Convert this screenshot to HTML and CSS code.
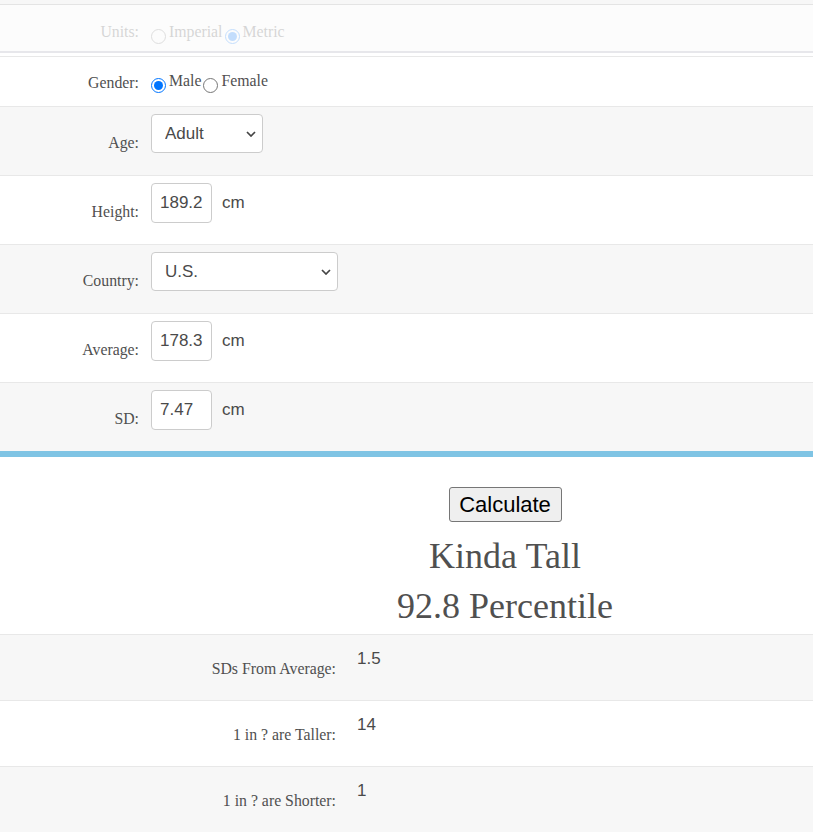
FILE: index.html
```html
<!DOCTYPE html>
<html lang="en">
<head>
<meta charset="utf-8">
<title>Height Percentile Calculator</title>
<link rel="stylesheet" href="styles.css">
</head>
<body>
<div class="top-strip"></div>
<div class="units-panel">
  <div class="units-row">
    <span class="label">Units:</span>
    <div class="radios">
      <input type="radio" name="units" class="radio"><span class="opt">Imperial</span><input type="radio" name="units" class="radio" checked><span class="opt">Metric</span>
    </div>
  </div>
</div>
<div class="spacer"></div>

<div class="row row-short">
  <label class="label">Gender:</label>
  <div class="field radios">
    <input type="radio" name="gender" class="radio" checked><span class="opt">Male</span><input type="radio" name="gender" class="radio"><span class="opt">Female</span>
  </div>
</div>

<div class="row alt">
  <label class="label">Age:</label>
  <div class="field">
    <span class="select-wrap">
      <select class="select select-age"><option>Adult</option></select>
      <svg class="chevron" width="10" height="6" viewBox="0 0 10 6"><path d="M1 1l4 4 4-4" fill="none" stroke="#444" stroke-width="1.7"/></svg>
    </span>
  </div>
</div>

<div class="row">
  <label class="label">Height:</label>
  <div class="field">
    <input class="num" type="text" value="189.2"><span class="unit">cm</span>
  </div>
</div>

<div class="row alt">
  <label class="label">Country:</label>
  <div class="field">
    <span class="select-wrap">
      <select class="select select-country"><option>U.S.</option></select>
      <svg class="chevron" width="10" height="6" viewBox="0 0 10 6"><path d="M1 1l4 4 4-4" fill="none" stroke="#444" stroke-width="1.7"/></svg>
    </span>
  </div>
</div>

<div class="row">
  <label class="label">Average:</label>
  <div class="field">
    <input class="num" type="text" value="178.3"><span class="unit">cm</span>
  </div>
</div>

<div class="row alt">
  <label class="label">SD:</label>
  <div class="field">
    <input class="num" type="text" value="7.47"><span class="unit">cm</span>
  </div>
</div>

<div class="divider"></div>

<div class="results">
  <button class="calc" type="button">Calculate</button>
  <div class="verdict">Kinda Tall</div>
  <div class="verdict">92.8 Percentile</div>
</div>

<div class="stat alt">
  <span class="stat-label">SDs From Average:</span>
  <span class="stat-value">1.5</span>
</div>
<div class="stat">
  <span class="stat-label">1 in ? are Taller:</span>
  <span class="stat-value">14</span>
</div>
<div class="stat alt">
  <span class="stat-label">1 in ? are Shorter:</span>
  <span class="stat-value">1</span>
</div>
</body>
</html>
```

FILE: styles.css
```css
html, body {
  margin: 0;
  padding: 0;
  background: #fff;
}

body {
  font-family: "Liberation Serif", "Times New Roman", serif;
  color: #505050;
}

.top-strip {
  height: 4px;
  background: #f7f7f7;
  border-bottom: 1px solid #e4e4e4;
}

.units-panel {
  height: 46px;
  background: #fcfcfc;
  border-bottom: 2px solid #e7e7eb;
}

.units-row {
  display: flex;
  align-items: flex-start;
  padding-top: 18px;
  opacity: 0.22;
}

.spacer {
  height: 3px;
  background: #fff;
}

.row {
  display: flex;
  height: 68px;
  border-top: 1px solid #e8e8e8;
  background: #fff;
}

.row.alt,
.stat.alt {
  background: #f7f7f7;
}

.row-short {
  height: 49px;
}

.label {
  width: 139px;
  flex: none;
  text-align: right;
  align-self: center;
  padding-top: 3px;
  font-size: 15.8px;
  line-height: 18px;
}

.units-row .label {
  align-self: flex-start;
  padding-top: 0;
}

.field {
  margin-left: 12px;
  padding-top: 7px;
  display: flex;
  align-items: center;
  align-self: flex-start;
}

.radios {
  display: flex;
  align-items: flex-start;
  margin-left: 12px;
}

.row-short .radios {
  padding-top: 15px;
}

.radio {
  width: 15px;
  height: 15px;
  margin: 6px 3px 0 2px;
  flex: none;
}

.radios .radio:first-child {
  margin-left: 0;
}

.opt {
  font-size: 15.8px;
  line-height: 18px;
}

.select-wrap {
  position: relative;
  display: inline-block;
}

.select {
  appearance: none;
  -webkit-appearance: none;
  display: block;
  height: 39px;
  box-sizing: border-box;
  border: 1px solid #ccc;
  border-radius: 4px;
  background: #fff;
  padding: 0 0 0 13px;
  font-family: "Liberation Sans", Arial, sans-serif;
  font-size: 17px;
  color: #4a4a4a;
}

.select-age {
  width: 112px;
}

.select-country {
  width: 187px;
}

.chevron {
  position: absolute;
  right: 7px;
  top: 17px;
  pointer-events: none;
}

.num {
  width: 61px;
  height: 40px;
  box-sizing: border-box;
  border: 1px solid #ccc;
  border-radius: 4px;
  padding: 0 0 0 8px;
  font-family: "Liberation Sans", Arial, sans-serif;
  font-size: 17px;
  color: #4a4a4a;
  background: #fff;
}

.unit {
  margin-left: 10px;
  font-family: "Liberation Sans", Arial, sans-serif;
  font-size: 17px;
  color: #4a4a4a;
}

.divider {
  height: 6px;
  background: #7fc4e4;
}

.results {
  height: 177px;
  box-sizing: border-box;
  padding: 30px 0 0 197px;
  display: flex;
  flex-direction: column;
  align-items: center;
}

.calc {
  width: 113px;
  height: 35px;
  margin: 0 0 9px;
  padding: 0 6px;
  font-family: "Liberation Sans", Arial, sans-serif;
  font-size: 22px;
  color: #000;
  background: #efefef;
  border: 1px solid #767676;
  border-radius: 3px;
}

.verdict {
  font-size: 36px;
  line-height: 50px;
  color: #505050;
}

.stat {
  display: flex;
  height: 65px;
  border-top: 1px solid #e8e8e8;
  background: #fff;
}

.stat-label {
  width: 336px;
  flex: none;
  text-align: right;
  align-self: center;
  padding-top: 2px;
  font-size: 15.8px;
  line-height: 18px;
}

.stat-value {
  margin-left: 21px;
  padding-top: 14px;
  font-family: "Liberation Sans", Arial, sans-serif;
  font-size: 17px;
  line-height: 20px;
  color: #4a4a4a;
}
```
